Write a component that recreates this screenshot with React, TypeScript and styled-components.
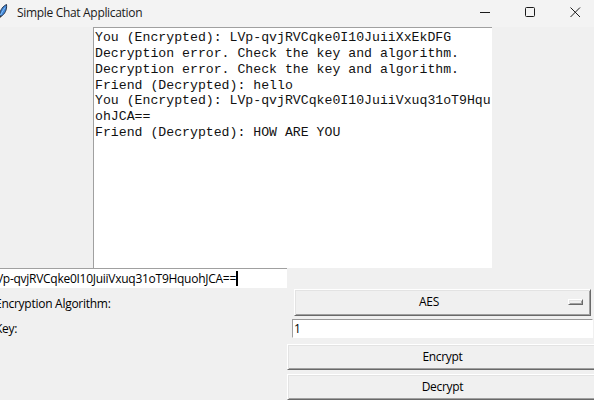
import React from "react";
import styled, { createGlobalStyle } from "styled-components";

const Global = createGlobalStyle`
  * { box-sizing: border-box; }
  html, body { margin: 0; padding: 0; overflow: hidden; background: #f0f0f0; }
`;

const Window = styled.div`
  width: 594px;
  height: 400px;
  overflow: hidden;
  display: flex;
  flex-direction: column;
  background: #f0f0f0;
  color: #000;
  font: 12px/16px "Open Sans", "Noto Sans", sans-serif;
`;

const TitleBar = styled.header`
  height: 27px;
  flex: none;
  display: flex;
  align-items: center;
  background: #f3f3f3;
`;

const Label = styled.span<{ $spacing?: number }>`
  white-space: pre;
  letter-spacing: ${(p) => p.$spacing ?? -0.3}px;
`;

const Title = styled(Label)`
  margin: -2px auto 0 7px;
  color: #1a1a1a;
`;

const Feather = styled.svg`
  width: 10px;
  height: 27px;
  flex: none;
`;

const Controls = styled.svg`
  width: 114px;
  height: 27px;
  flex: none;
`;

const ChatLog = styled.div`
  width: 399px;
  height: 241px;
  flex: none;
  margin: 0 0 0 93px;
  padding: 2px 0 0 1px;
  border-top: 1px solid #a0a0a0;
  border-left: 1px solid #a0a0a0;
  background: #fff;
  color: #111;
  font: 13.2px/15.85px "Liberation Mono", monospace;
`;

const LogLine = styled.div`
  white-space: pre;
`;

const MessageEntry = styled.div`
  width: 287px;
  height: 20px;
  flex: none;
  display: flex;
  justify-content: flex-end;
  align-items: center;
  padding-right: 49px;
  overflow: hidden;
  border-top: 1px solid #a0a0a0;
  background: #fff;
`;

const Caret = styled.span`
  width: 2px;
  height: 15px;
  flex: none;
  background: #000;
`;

const Form = styled.div`
  flex: none;
  display: grid;
  grid-template-columns: 287px 307px;
  grid-template-rows: 30px 24px 2px 26px 4px 26px;
`;

const FieldName = styled(Label)<{ $shift: number; $drop: number }>`
  margin-left: ${(p) => p.$shift}px;
  padding-top: ${(p) => p.$drop}px;
`;

const Raised = styled.div`
  display: flex;
  align-items: center;
  justify-content: center;
  background: #f0f0f0;
  border: 1px solid;
  border-color: #fff #696969 #696969 #fff;
  box-shadow: inset 1px 1px #e3e3e3, inset -1px -1px #a0a0a0;
`;

const OptionMenu = styled(Raised)`
  width: 297px;
  height: 27px;
  margin: 1px 0 0 7px;
  padding: 0 7px 1px 0;
`;

const OptionValue = styled(Label)`
  flex: 1;
  padding-right: 5px;
  text-align: center;
`;

const Indicator = styled(Raised)`
  width: 15px;
  height: 6px;
`;

const KeyEntry = styled.div`
  width: 301px;
  height: 19px;
  margin: 1px 0 0 5px;
  padding-left: 1px;
  display: flex;
  align-items: center;
  background: #fff;
  border: 1px solid #fff;
  border-top-color: #999;
  border-left: 1px solid #a0a0a0;
`;

const ActionButton = styled(Raised)<{ $row: number }>`
  grid-row: ${(p) => p.$row};
  grid-column: 2;
  width: 310px;
  border-right: 0;
`;

const messages = [
  "You (Encrypted): LVp-qvjRVCqke0I10JuiiXxEkDFG",
  "Decryption error. Check the key and algorithm.",
  "Decryption error. Check the key and algorithm.",
  "Friend (Decrypted): hello",
  "You (Encrypted): LVp-qvjRVCqke0I10JuiiVxuq31oT9Hqu",
  "ohJCA==",
  "Friend (Decrypted): HOW ARE YOU",
];

export default function App() {
  return (
    <>
      <Global />
      <Window>
        <TitleBar>
          <Feather viewBox="0 0 10 27">
            <path d="M6.5 4.5C3.5 6 0 9 -.5 16L1 16.5C5 14 7.2 9.5 6.5 4.5Z" fill="#3f86d8" stroke="#17243a" strokeWidth=".9" />
            <path d="M5 7.5C3.5 10 2 12 .5 15" fill="none" stroke="#8fc4f8" strokeWidth="1" />
            <path d="M1 15.5L-.5 18.5" stroke="#333" />
          </Feather>
          <Title $spacing={-0.32}>Simple Chat Application</Title>
          <Controls viewBox="0 0 114 27" fill="none" stroke="#1a1a1a">
            <path d="M0 12.5H10" />
            <rect x="45.5" y="7.5" width="9" height="9" rx="1" />
            <path d="M90.5 7.5L100 17M100 7.5L90.5 17" />
          </Controls>
        </TitleBar>
        <ChatLog>
          {messages.map((message, i) => (
            <LogLine key={i}>{message}</LogLine>
          ))}
        </ChatLog>
        <MessageEntry>
          <Label $spacing={-0.27}>LVp-qvjRVCqke0I10JuiiVxuq31oT9HquohJCA==</Label>
          <Caret />
        </MessageEntry>
        <Form>
          <FieldName $shift={-5} $drop={8} $spacing={-0.27}>Encryption Algorithm:</FieldName>
          <OptionMenu>
            <OptionValue>AES</OptionValue>
            <Indicator />
          </OptionMenu>
          <FieldName $shift={-5} $drop={3}>Key:</FieldName>
          <KeyEntry><Label>1</Label></KeyEntry>
          <ActionButton $row={4}><Label>Encrypt</Label></ActionButton>
          <ActionButton $row={6}><Label>Decrypt</Label></ActionButton>
        </Form>
      </Window>
    </>
  );
}
